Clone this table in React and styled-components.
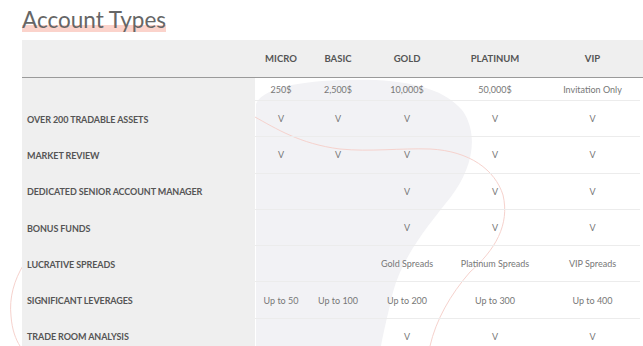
import React from "react"
import styled, { createGlobalStyle } from "styled-components"

const GlobalStyle = createGlobalStyle`
  html, body {
    margin: 0;
    padding: 0;
    background: #fff;
  }
  body {
    font-family: Lato, "Open Sans", sans-serif;
  }
`

const COLS = "233px 52px 62px 76px 100px 95px"

const plans = ["MICRO", "BASIC", "GOLD", "PLATINUM", "VIP"]
const prices = ["250$", "2,500$", "10,000$", "50,000$", "Invitation Only"]

const rows = [
  ["OVER 200 TRADABLE ASSETS", ["V", "V", "V", "V", "V"]],
  ["MARKET REVIEW", ["V", "V", "V", "V", "V"]],
  ["DEDICATED SENIOR ACCOUNT MANAGER", ["", "", "V", "V", "V"]],
  ["BONUS FUNDS", ["", "", "V", "V", "V"]],
  ["LUCRATIVE SPREADS", ["", "", "Gold Spreads", "Platinum Spreads", "VIP Spreads"]],
  ["SIGNIFICANT LEVERAGES", ["Up to 50", "Up to 100", "Up to 200", "Up to 300", "Up to 400"]],
  ["TRADE ROOM ANALYSIS", ["", "", "V", "V", "V"]],
]

const AccountTypes = () => {
  return (
    <Wrapper>
      <Decor viewBox="0 0 643 346" width="643" height="346">
        <path
          d="M 256 104 C 262 90, 290 82, 340 80 C 395 78, 440 84, 462 110 C 480 135, 472 170, 450 198 C 426 228, 402 258, 393 292 C 387 318, 383 334, 381 346 L 256 346 Z"
          fill="#f2f2f5"
        />
        <path
          d="M 255 117 C 275 128, 300 144, 340 149 C 370 152, 400 148, 430 149 C 470 151, 495 170, 503 195 C 510 225, 495 250, 470 272 C 450 295, 436 320, 430 346"
          fill="none"
          stroke="#f6d2cd"
          strokeWidth="1"
        />
        <path
          d="M 24 264 C 14 280, 9 298, 11 316 C 12 330, 16 340, 20 346"
          fill="none"
          stroke="#f6d2cd"
          strokeWidth="1"
        />
      </Decor>
      <Title>
        <span>Account Types</span>
      </Title>
      <Table>
        <HeadRow>
          <Cell />
          {plans.map(p => (
            <HeadCell key={p}>{p}</HeadCell>
          ))}
        </HeadRow>
        <PriceRow>
          <LabelCell />
          {prices.map(p => (
            <DataCell key={p}>{p}</DataCell>
          ))}
        </PriceRow>
        {rows.map(([label, values]) => (
          <Row key={label}>
            <LabelCell>{label}</LabelCell>
            {values.map((v, i) => (
              <DataCell key={i}>{v}</DataCell>
            ))}
          </Row>
        ))}
      </Table>
    </Wrapper>
  )
}

const Wrapper = styled.section`
  position: relative;
  width: 643px;
  height: 346px;
  overflow: hidden;
  padding-left: 22px;
  box-sizing: border-box;
`

const Decor = styled.svg`
  position: absolute;
  left: 0;
  top: 0;
  z-index: 0;
`

const Title = styled.h1`
  position: relative;
  z-index: 1;
  margin: 0;
  height: 40px;
  padding-top: 6px;
  box-sizing: border-box;
  font-size: 22.5px;
  line-height: 27px;
  font-weight: 400;
  color: #666;

  span {
    background: linear-gradient(
      to bottom,
      transparent 72%,
      #fbd3cb 72%,
      #fbd3cb 98%,
      transparent 98%
    );
  }
`

const Table = styled.div`
  position: relative;
  z-index: 1;
  display: flex;
  flex-direction: column;
`

const Row = styled.div`
  display: grid;
  grid-template-columns: ${COLS};
  height: 36.3px;
`

const HeadRow = styled(Row)`
  height: 38px;
  background: #efefef;
  border-bottom: 1.5px solid #9a9a9a;
  box-sizing: border-box;
`

const PriceRow = styled(Row)`
  height: 23px;
`

const Cell = styled.div`
  display: flex;
  align-items: center;
  justify-content: center;
  box-sizing: border-box;
`

const HeadCell = styled(Cell)`
  font-size: 9.5px;
  font-weight: 700;
  color: #555;
`

const LabelCell = styled(Cell)`
  justify-content: flex-start;
  padding-left: 5px;
  background: #efefef;
  font-size: 9px;
  font-weight: 700;
  color: #555;
  letter-spacing: -0.1px;
`

const DataCell = styled(Cell)`
  border-bottom: 1px solid #ececec;
  font-size: 9px;
  color: #777;
  white-space: nowrap;
`

const App = () => (
  <>
    <GlobalStyle />
    <AccountTypes />
  </>
)

export default App
